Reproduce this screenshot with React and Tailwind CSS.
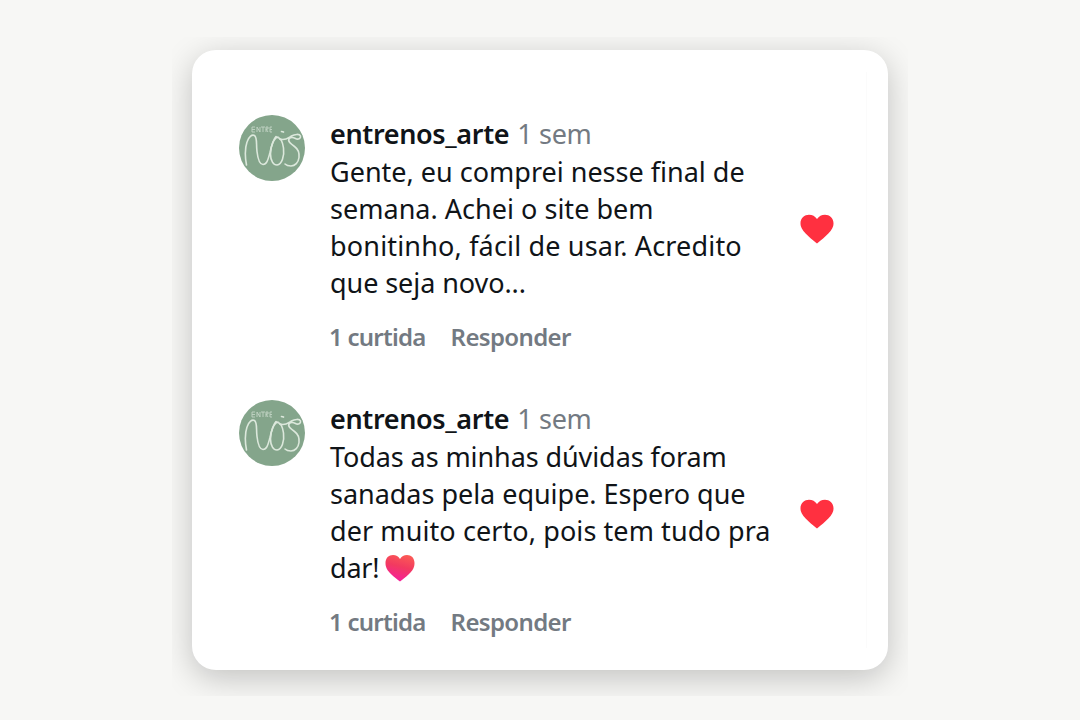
const COMMENTS = [
  {
    id: 1,
    user: 'entrenos_arte',
    time: '1 sem',
    lines: [
      { text: 'Gente, eu comprei nesse final de', tracking: 'tracking-[0px]' },
      { text: 'semana. Achei o site bem', tracking: 'tracking-[0.02px]' },
      { text: 'bonitinho, fácil de usar. Acredito', tracking: 'tracking-[0.17px]' },
      { text: 'que seja novo...', tracking: 'tracking-[-0.07px]' },
    ],
  },
  {
    id: 2,
    user: 'entrenos_arte',
    time: '1 sem',
    lines: [
      { text: 'Todas as minhas dúvidas foram', tracking: 'tracking-[-0.09px]' },
      { text: 'sanadas pela equipe. Espero que', tracking: 'tracking-[-0.03px]' },
      { text: 'der muito certo, pois tem tudo pra', tracking: 'tracking-[0.09px]' },
      { text: 'dar!', tracking: 'tracking-[-0.2px]', heart: true },
    ],
  },
]

function Avatar() {
  return (
    <svg viewBox="0 0 66 66" className="mt-[3px] h-[66px] w-[66px] shrink-0" fill="none">
      <circle cx="33" cy="33" r="33" fill="#84a58b" />
      <g stroke="#dce8dc" strokeWidth="1.600" strokeLinecap="round" strokeLinejoin="round">
        <path d="M7.500 50C6 42 6 33 8 27c1.500-5 5-8 7.500-6.500 3 2 1.500 9 2.500 16 .8 7 2.500 13 6 13 4 0 5-5 7-12 1.500-7 3-13 6-16" />
        <path d="M39 22c-4 1-7.500 9-7.500 17 0 7 3 11 6.500 11 5-.5 7.500-9 6.500-17-.8-6-3.500-10.500-7-11" />
        <path d="M41 24c5 2 8-1 11.500-3 3-1.700 8-2.500 9 0 .6 2.500-2.500 4-5 2.500-2.500-1.300-5-1.500-6.500.5-1.500 2.500 2 5 5.500 7.500s5 6 4.500 11c-.6 5-4 8.500-8 8.500-3 0-5-1-6-2" />
        <path d="m42.500 16.500 2 .6" />
      </g>
      <g stroke="#c3d5c5" strokeWidth="0.9">
        <path d="M16 12h-3v5h3M13 14.500h3M18 17v-5l3 5v-5M22 12h4M24 12v5M27 17v-5h2v2h-2l2 3M33 12h-2v5h2M31 14.500h2" />
      </g>
    </svg>
  )
}

function LikeHeart() {
  return (
    <svg viewBox="0 0 34 30" className="h-[30px] w-[34px]">
      <path d="M17 29.500C14 27 2 18 .8 12-.8 5 4 .8 9 .8c3.500 0 6 1.500 8 4.200C19 2.300 21.500.8 25 .8c5 0 9.800 4.200 8.200 11.200C32 18 20 27 17 29.500z" fill="#ff3040" />
    </svg>
  )
}

function EmojiHeart() {
  return (
    <svg viewBox="0 0 30 28" className="ml-[6px] h-[28px] w-[30px]">
      <defs>
        <linearGradient id="emoji-heart" x1="0.700" y1="0" x2="0.400" y2="1">
          <stop offset="0" stopColor="#fb5a55" />
          <stop offset="0.450" stopColor="#f23a60" />
          <stop offset="1" stopColor="#f61e9c" />
        </linearGradient>
      </defs>
      <path d="M15 27.500C10 23.500 2 18 .8 12-.6 5 3 1 8 1c3 0 5.500 1.500 7 4 1.500-2.500 4-4 7-4 5 0 8.600 4 7.200 11C28 18 20 23.500 15 27.500z" fill="url(#emoji-heart)" />
    </svg>
  )
}

function Comment({ comment }) {
  return (
    <article className="flex h-[285px] items-start">
      <Avatar />
      <div className="ml-[25px] w-[469px] shrink-0 pt-[2px]">
        <div className="flex h-[40px] items-center whitespace-nowrap text-[27px] leading-[40px]">
          <span className="font-semibold tracking-[-0.36px] text-[#101418]">{comment.user}</span>
          <span className="ml-[8px] tracking-[-0.3px] text-[#737a82]">{comment.time}</span>
        </div>
        <div className="-mt-px text-[27px] text-[#101418]">
          {comment.lines.map(line => (
            <p key={line.text} className="flex h-[37px] items-center whitespace-nowrap leading-[37px]">
              <span className={line.tracking}>{line.text}</span>
              {line.heart && <EmojiHeart />}
            </p>
          ))}
        </div>
        <div className="mt-[18px] -ml-px flex h-[36px] items-center whitespace-nowrap text-[24px] font-semibold text-[#737a82]">
          <span className="tracking-[-0.750px]">1 curtida</span>
          <span className="ml-[25px] tracking-[-0.650px]">Responder</span>
        </div>
      </div>
      <div className="mt-[101.500px] ml-[0.500px]">
        <LikeHeart />
      </div>
    </article>
  )
}

export default function App() {
  return (
    <main className="flex h-[720px] w-[1080px] items-start justify-center overflow-hidden bg-[#f7f7f5] pt-[37px] font-['Noto_Sans','Open_Sans',sans-serif]">
      <div className="overflow-hidden px-[20px] pt-[13px] pb-[26px]">
        <section className="flex h-[620px] w-[696px] rounded-[24px] bg-white pr-[21px] pl-[47px] shadow-[0_8px_32px_rgba(0,0,0,0.22)]">
          <div className="my-[22px] w-full border-r border-[#fbfbfb] pt-[40px]">
            {COMMENTS.map(comment => (
              <Comment key={comment.id} comment={comment} />
            ))}
          </div>
        </section>
      </div>
    </main>
  )
}
